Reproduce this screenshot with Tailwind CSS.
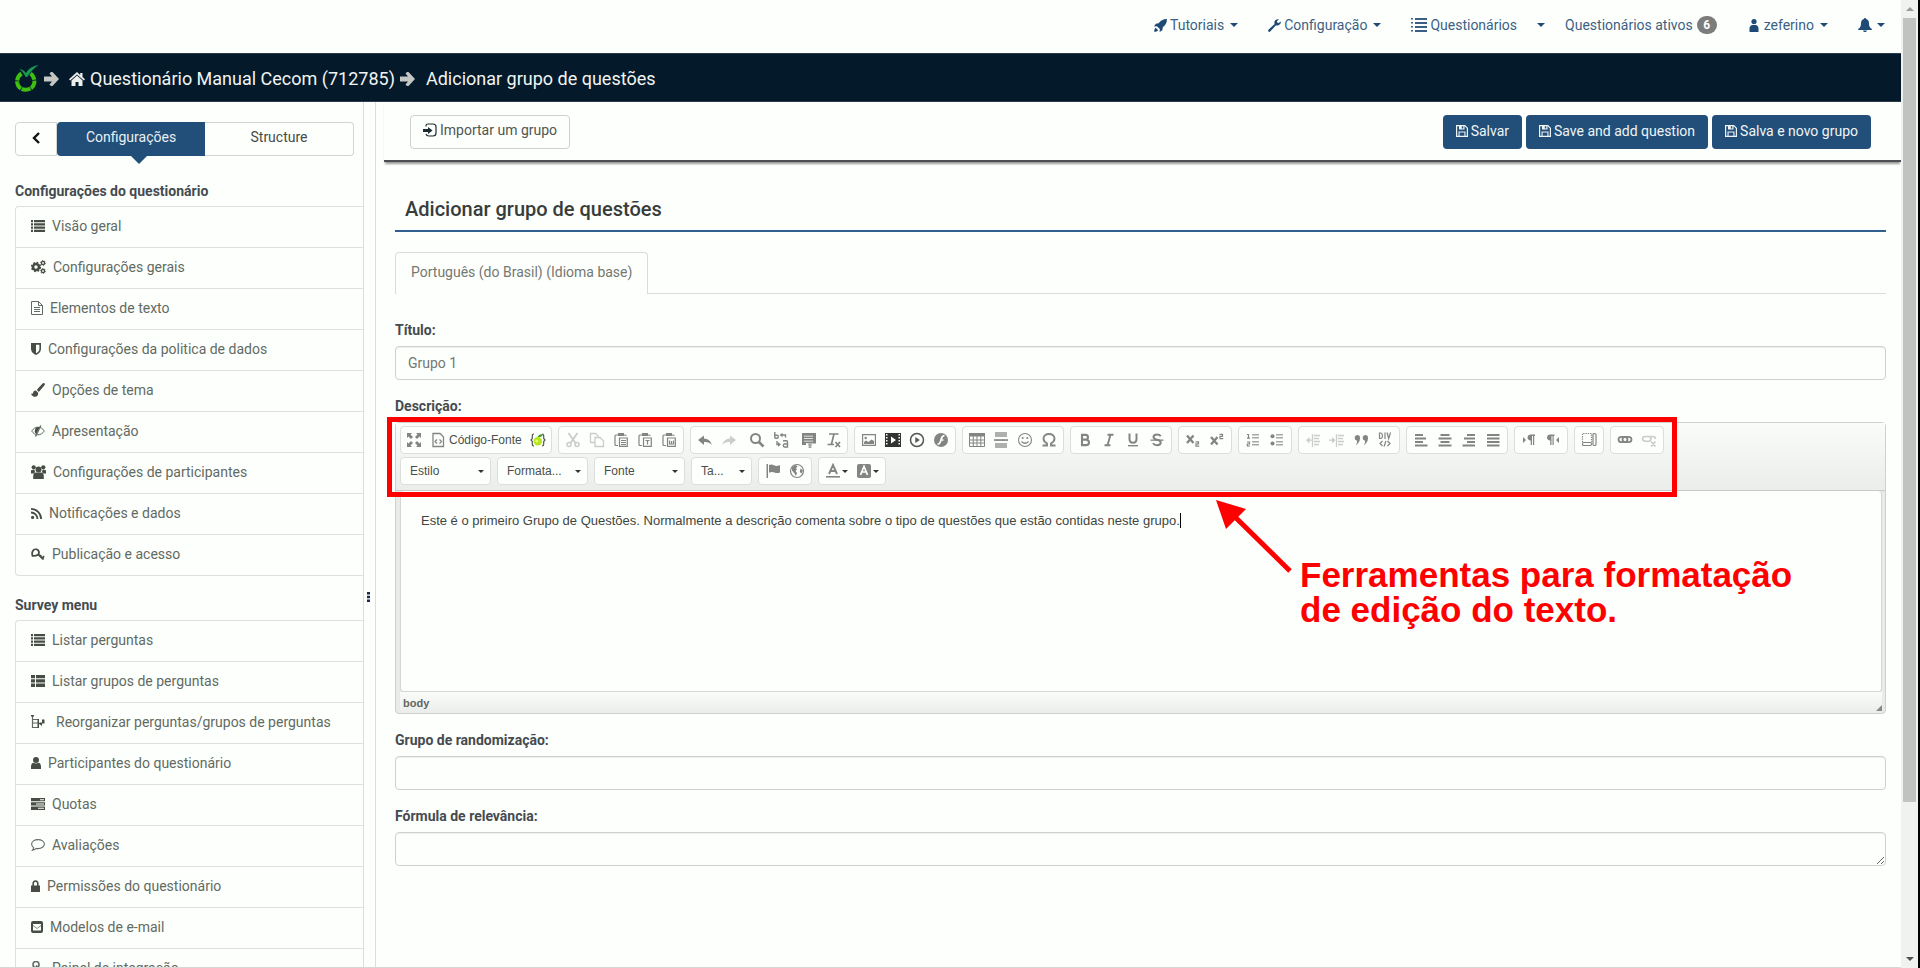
<!DOCTYPE html>
<html lang="pt-BR">
<head>
<meta charset="utf-8">
<title>Adicionar grupo de questões</title>
<script src="https://cdn.jsdelivr.net/npm/@tailwindcss/browser@4"></script>
</head>
<body class="bg-[#fdfffc] font-['Roboto',sans-serif] text-sm leading-5 text-[#4f564f]">

<!-- Icon definitions -->
<svg class="hidden" aria-hidden="true">
  <symbol id="caret" viewBox="0 0 8 4"><path d="M0 0h8L4 4z"/></symbol>
  <symbol id="rocket" viewBox="0 0 14 14"><path d="M14 0C9.500 0 7 2 5 4.500L2 5 0 8l3.200-.3L6.300 10.800 6 14l3-2 .5-3C12 7 14 4.500 14 0zM1.800 9.500C.5 10.500.3 12 .2 13.800 2 13.700 3.500 13.500 4.500 12.200z"/></symbol>
  <symbol id="wrench" viewBox="0 0 14 14"><path d="M13.800 2.600 11.500 4.300 9.800 3.900 9.600 2.300 11.800.4C9.800-.3 7.400.7 6.900 3c-.2 1 0 1.700.2 2.300L.5 11.500c-.6.7-.6 1.300 0 1.900.6.7 1.300.7 1.900 0L8.400 6.900c.7.2 1.600.3 2.500 0 2.200-.5 3.300-2.500 2.900-4.300z"/></symbol>
  <symbol id="listlines" viewBox="0 0 16 14"><path d="M4 0h12v2H4zM4 4h12v2H4zM4 8h12v2H4zM4 12h12v2H4zM0 0h2v1.500H0zM0 4h2v1.500H0zM0 8h2v1.500H0zM0 12h2v1.500H0z"/></symbol>
  <symbol id="person" viewBox="0 0 10 13"><circle cx="5" cy="2.600" r="2.600"/><path d="M.5 13V9.500c0-2.300 1.600-3.500 2.700-3.500h3.600c1.100 0 2.700 1.200 2.700 3.500V13z"/></symbol>
  <symbol id="bell" viewBox="0 0 14 14"><path d="M7 0c.7 0 1 .5 1 1 2 .5 3 2.200 3 4.300 0 3 .8 4.500 2.800 5.700v1H.2v-1C2.200 9.800 3 8.300 3 5.300 3 3.200 4 1.500 6 1c0-.5.300-1 1-1zM5 12.500h4C8.700 13.500 8 14 7 14s-1.700-.5-2-1.500z"/></symbol>
  <symbol id="arrow" viewBox="0 0 15 14"><path d="M7 0h1.500L15 7l-6.500 7H7L5.500 12.500 8 9.500H0v-5h8L5.500 1.500z"/></symbol>
  <symbol id="home" viewBox="0 0 16 14"><path d="M8 0 0 7.200l1.200 1.300L8 2.500l6.800 6L16 7.200l-2.500-2.300V1h-2.300v2zM8 3.500 2.500 8.500V14h4v-4h3v4h4V8.500z"/></symbol>
  <symbol id="import" viewBox="0 0 14 14"><path d="M3 3.500V2.500Q3 1 5 1h5q3 0 3 3v6q0 3-3 3H6q-2.500 0-3-2" fill="none" stroke="currentColor" stroke-width="1.200"/><path d="M5 4v2H0v3h5v2l4.500-3.500z"/></symbol>
  <symbol id="floppy" viewBox="0 0 12 12"><path d="M.6.6h8.200l2.600 2.600v8.200H.6z" fill="none" stroke="currentColor" stroke-width="1.200"/><path fill-rule="evenodd" d="M3 0h5.500v4.500H3zM5.800 1v2.500h1.500V1zM2.500 6.500h7V12h-7zM3.600 7.600v3.400h4.800V7.600z"/></symbol>
  <symbol id="list" viewBox="0 0 14 12"><path d="M3 0h11v2.200H3zM3 3.200h11v2.200H3zM3 6.500h11v2.200H3zM3 9.700h11v2.200H3zM0 0h2v2.200H0zM0 3.200h2v2.200H0zM0 6.500h2v2.200H0zM0 9.700h2v2.200H0z"/></symbol>
  <symbol id="thlist" viewBox="0 0 14 12"><path d="M0 0h4v3.300H0zM5 0h9v3.300H5zM0 4.300h4v3.300H0zM5 4.300h9v3.300H5zM0 8.600h4V12H0zM5 8.600h9V12H5z"/></symbol>
  <symbol id="cogs" viewBox="0 0 15 14"><circle cx="5" cy="7" r="3" fill="none" stroke="currentColor" stroke-width="2.600"/><circle cx="5" cy="7" r="4.500" fill="none" stroke="currentColor" stroke-width="1.400" stroke-dasharray="1.770"/><circle cx="12" cy="3" r="1.600" fill="none" stroke="currentColor" stroke-width="1.400"/><circle cx="12" cy="11" r="1.600" fill="none" stroke="currentColor" stroke-width="1.400"/><circle cx="12" cy="3" r="2.500" fill="none" stroke="currentColor" stroke-width=".8" stroke-dasharray="1.300"/><circle cx="12" cy="11" r="2.500" fill="none" stroke="currentColor" stroke-width=".8" stroke-dasharray="1.300"/></symbol>
  <symbol id="filetext" viewBox="0 0 12 14"><path d="M.5.5h7L11.500 4.500v9H.5zM7.500.5v4h4M3 6.500h6M3 8.500h6M3 10.500h6" fill="none" stroke="currentColor"/></symbol>
  <symbol id="shield" viewBox="0 0 10 12"><path fill-rule="evenodd" d="M0 0h10v6c0 3-2.500 5-5 6C2.500 11 0 9 0 6zM5 1.700v8.600C7 9.300 8.400 8 8.400 6V1.700z"/></symbol>
  <symbol id="brush" viewBox="0 0 14 14"><path d="M13.600.4c-.7-.6-1.500-.4-2 .1L5.800 6.800 7.800 9l5.700-6.800c.5-.6.6-1.300.1-1.800zM5 7.500c-1.500-.2-2.500.7-2.800 2C2 10.800 1 11 0 10.700 1 13 2.700 14 4.400 13.800c2-.2 3-2 2.700-4z"/></symbol>
  <symbol id="eyeoff" viewBox="0 0 14 12"><path d="M.7 6C2.300 3.500 4.500 2.200 7 2.200S11.700 3.500 13.300 6C11.700 8.500 9.500 9.800 7 9.800S2.300 8.500.7 6z" fill="none" stroke="currentColor"/><path d="M4 5a3 3 0 0 1 4.500-2.500L5.500 8.800A3 3 0 0 1 4 5z"/><path d="M9.800.5 4.500 11.500" stroke="currentColor" stroke-width="1.400"/></symbol>
  <symbol id="users" viewBox="0 0 15 14"><circle cx="2.700" cy="2.300" r="2.100"/><circle cx="12.300" cy="2.300" r="2.100"/><path d="M0 8.500V5.500Q.3 4.500 3.500 4.800L4 7 3 8.500zM15 8.500V5.500q-.3-1-3.500-.7L11 7l1 1.500z"/><circle cx="7.500" cy="4.500" r="3"/><path d="M2.200 14v-3c0-2.500 1.500-3.500 2.600-3.500h5.400c1.100 0 2.600 1 2.600 3.500v3z"/></symbol>
  <symbol id="rss" viewBox="0 0 11 11"><circle cx="1.600" cy="9.400" r="1.600"/><path d="M0 4.500A6.500 6.500 0 0 1 6.500 11M0 .9A10.100 10.100 0 0 1 10.100 11" fill="none" stroke="currentColor" stroke-width="1.800"/></symbol>
  <symbol id="key" viewBox="0 0 14 12"><path d="M4.500 1.200a3.300 3.300 0 0 1 3.200 4.600C7 7.700 3.800 8 1.500 7.800.5 5 1.800 1.200 4.500 1.200zM6.800 6l5.800 5.500M8.500 9l1.800-1.800M10.500 10.800l2.600-2.600" fill="none" stroke="currentColor" stroke-width="1.800"/></symbol>
  <symbol id="reorder" viewBox="0 0 14 14"><path d="M1.500 1v12M1.500 4.500H7M1.500 8H7M1.500 12.500H7" fill="none" stroke="currentColor" stroke-width="1.200"/><path d="M0 0h3v1.500H0zM6.500 4h1.500v9H6.500zM11 4.500h2.500v4H11V11L7.500 8.500 9 7.500h2z"/></symbol>
  <symbol id="userfa" viewBox="0 0 10 12"><circle cx="5" cy="3" r="3"/><path d="M0 12V9.500C0 7 1.300 5.800 2.500 5.700c1.500 1 3.500 1 5 0C8.700 5.800 10 7 10 9.500V12z"/></symbol>
  <symbol id="quota" viewBox="0 0 14 12"><path fill-rule="evenodd" d="M0 0h14v3.300H0zM9 1.200v1h4v-1zM0 4.300h14v3.300H0zM5 5.500v1h8v-1zM0 8.600h14V12H0zM7 9.800v1h6v-1z"/></symbol>
  <symbol id="comment" viewBox="0 0 14 12"><path d="M7 .6c3.600 0 6.400 2 6.400 4.500S10.600 9.600 7 9.600c-.6 0-1.200 0-1.700-.2C4.200 10.400 3 11 1.500 11.200c.7-.8 1-1.500 1.200-2.500C1.400 7.900.6 6.700.6 5.100.6 2.600 3.400.6 7 .6z" fill="none" stroke="currentColor" stroke-width="1.100"/></symbol>
  <symbol id="lock" viewBox="0 0 9 12"><path d="M2.200 6V3.800C2.200 2.200 3 1 4.500 1s2.300 1.200 2.300 2.800V6" fill="none" stroke="currentColor" stroke-width="1.600"/><path d="M0 5.500h9V12H0z"/></symbol>
  <symbol id="mail" viewBox="0 0 12 12"><path fill-rule="evenodd" d="M2 0h8q2 0 2 2v8q0 2-2 2H2q-2 0-2-2V2q0-2 2-2zM2 3v6.500h8V3z"/><path d="M2 4.500 6 7.500l4-3" fill="none" stroke="currentColor" stroke-width=".8"/></symbol>
  <symbol id="plug" viewBox="0 0 14 14"><circle cx="5" cy="3.500" r="3" fill="none" stroke="currentColor" stroke-width="1.600"/><path d="M5 6.500v6h5M5 4.500l5 4.500" fill="none" stroke="currentColor" stroke-width="1.600"/></symbol>

  <!-- Editor toolbar -->
  <symbol id="e-max" viewBox="0 0 16 16"><path d="M1 1h5L4.500 2.500 7 5 5 7 2.500 4.500 1 6zM15 1v5l-1.500-1.500L11 7 9 5l2.500-2.500L10 1zM1 15v-5l1.500 1.500L5 9l2 2-2.500 2.500L6 15zM15 15h-5l1.500-1.500L9 11l2-2 2.500 2.500L15 10z"/></symbol>
  <symbol id="e-source" viewBox="0 0 16 16"><path d="M3 1.500h7L13.500 5v9.500H3zM7 7.500 5 9.500l2 2M9.500 7.500l2 2-2 2" fill="none" stroke="currentColor" stroke-width="1.300"/></symbol>
  <symbol id="e-cut" viewBox="0 0 16 16"><path d="M3.500 1 10.500 11M12.500 1 5.500 11" fill="none" stroke="currentColor" stroke-width="1.800"/><circle cx="4" cy="12.500" r="2" fill="none" stroke="currentColor" stroke-width="1.500"/><circle cx="12" cy="12.500" r="2" fill="none" stroke="currentColor" stroke-width="1.500"/></symbol>
  <symbol id="e-copy" viewBox="0 0 16 16"><path d="M5.500 10.500h-4v-9h5l3 3M6 5.500h5L14.500 9v5.500H6z" fill="none" stroke="currentColor" stroke-width="1.300"/></symbol>
  <symbol id="e-paste" viewBox="0 0 16 16"><path d="M5 13.500H3q-1 0-1-1V4q0-1 1-1h9q1 0 1 1M6.500 6h7.800v8.300H6.500zM8 8.500h5M8 10.500h5M8 12.500h5" fill="none" stroke="currentColor" stroke-width="1.200"/><path d="M5 1h6v3H5z"/></symbol>
  <symbol id="e-pastet" viewBox="0 0 16 16"><path d="M5 13.500H3q-1 0-1-1V4q0-1 1-1h9q1 0 1 1M6.500 6h7.800v8.300H6.500zM8.500 8.500h4M10.500 8.500v4" fill="none" stroke="currentColor" stroke-width="1.200"/><path d="M5 1h6v3H5z"/></symbol>
  <symbol id="e-pastew" viewBox="0 0 16 16"><path d="M5 13.500H3q-1 0-1-1V4q0-1 1-1h9q1 0 1 1M6.500 6h7.800v8.300H6.500zM8.500 8.500v3.500h4V8.500M10.500 9v3" fill="none" stroke="currentColor" stroke-width="1.200"/><path d="M5 1h6v3H5z"/></symbol>
  <symbol id="e-undo" viewBox="0 0 16 16"><path d="M1 8 7 3.500V6.500q6 .2 8 6.500-3-3.500-8-3V13z"/></symbol>
  <symbol id="e-redo" viewBox="0 0 16 16"><path d="M15 8 9 3.500V6.500q-6 .2-8 6.500 3-3.500 8-3V13z"/></symbol>
  <symbol id="e-find" viewBox="0 0 16 16"><circle cx="6.500" cy="6.500" r="4.500" fill="none" stroke="currentColor" stroke-width="2"/><path d="m9.500 9.500 5 5" stroke="currentColor" stroke-width="2.600"/></symbol>
  <symbol id="e-replace" viewBox="0 0 16 16"><path d="M1.800 0v6.200M1.800 3.200h2.500q1 .3 1 1.500t-1 1.500H1.800M10 8.700h3.500q1 0 1 1V15H11.500q-1.200-.3-1.200-1.500t1.200-1.500h3M8.500 3h4v2.500M5.500 12.500H4V9" fill="none" stroke="currentColor" stroke-width="1.400"/><path d="m9.500.8-3 2.200 3 2.200zM5 10l3 2.400-3 2.400z"/></symbol>
  <symbol id="e-selall" viewBox="0 0 16 16"><path fill-rule="evenodd" d="M1 1h14v10.500H6.500V11H5v2H1zM3 3.800v.6h9v-.6zM3 6.300v.6h9v-.6zM3 8.800v.6h9v-.6z"/><path d="M7 13h4M9 12v3.500M7.500 15.200h3" stroke="currentColor" stroke-width="1"/></symbol>
  <symbol id="e-rmfmt" viewBox="0 0 16 16"><path d="M4 2h9.500M9 2 6.500 12M2.500 12.500H9M10.500 10l4.500 5M15 10l-4.500 5" fill="none" stroke="currentColor" stroke-width="1.700"/></symbol>
  <symbol id="e-image" viewBox="0 0 16 16"><path fill-rule="evenodd" d="M1 2h14v12H1zM2.200 3.200v9.600h11.600V3.200z"/><circle cx="4.700" cy="6" r="1.200"/><path d="m3 12v-2l2-1.500 2.500 1.500 3-2.500L13 9v3z"/></symbol>
  <symbol id="e-video" viewBox="0 0 16 16"><path fill-rule="evenodd" fill="#333" d="M0 1h16v14H0zM1 2v1.500h1.500V2zM1 5v1.500h1.500V5zM1 8v1.500h1.500V8zM1 11v1.500h1.500V11zM13.500 2v1.500H15V2zM13.500 5v1.500H15V5zM13.500 8v1.500H15V8zM13.500 11v1.500H15V11zM6 4.500v7l5-3.500z"/></symbol>
  <symbol id="e-play" viewBox="0 0 16 16"><circle cx="8" cy="8" r="6.500" fill="none" stroke="#555" stroke-width="1.500"/><path fill="#555" d="M6.300 5v6l4.500-3z"/></symbol>
  <symbol id="e-flash" viewBox="0 0 16 16"><circle cx="8" cy="8" r="7"/><path d="M11.500 3.500Q9 4 8.200 7L7.500 9.500Q6.800 12 4.500 12.500M7.500 8h3" fill="none" stroke="#fdfffc" stroke-width="1.700"/></symbol>
  <symbol id="e-table" viewBox="0 0 16 16"><path d="M0 1h16v3.500H0z"/><path d="M.5 4v10.500h15V4M.5 8h15M.5 11h15M4.300 4v10.500M8 4v10.500M11.800 4v10.500" fill="none" stroke="currentColor"/></symbol>
  <symbol id="e-hr" viewBox="0 0 16 16"><path d="M2 0h12v5H2zM2 11h12v5H2z" opacity=".65"/><path d="M1 7.200h14v1.700H1z"/></symbol>
  <symbol id="e-smile" viewBox="0 0 16 16"><circle cx="8" cy="8" r="6.500" fill="none" stroke="currentColor" stroke-width="1.100"/><circle cx="5.700" cy="6" r="1"/><circle cx="10.300" cy="6" r="1"/><path d="M4.500 9.500q3.500 3.500 7 0" fill="none" stroke="currentColor" stroke-width="1.200"/></symbol>
  <symbol id="e-omega" viewBox="0 0 16 16"><path d="M1.500 13.500H6v-2C3.500 10 2.500 8.500 2.500 6.500 2.500 3.800 4.800 2 8 2s5.500 1.800 5.500 4.500c0 2-1 3.500-3.500 5v2h4.500" fill="none" stroke="currentColor" stroke-width="1.900"/></symbol>
  <symbol id="e-bold" viewBox="0 0 16 16"><path d="M5 2.500v11M4 2.900h4.500q2.500.2 2.500 2.300T8.500 7.500H5M5 7.700h4q3 .2 3 2.700T9 13.100H4" fill="none" stroke="currentColor" stroke-width="2.100"/></symbol>
  <symbol id="e-italic" viewBox="0 0 16 16"><path d="M6.500 2.700h6M3.500 13.200h6M9.500 2.700l-3 10.500" fill="none" stroke="currentColor" stroke-width="1.900"/></symbol>
  <symbol id="e-under" viewBox="0 0 16 16"><path d="M4.500 1.500V7q0 3.700 3.500 3.700T11.500 7V1.500" fill="none" stroke="currentColor" stroke-width="2"/><path d="M3 13h10v1.400H3z"/></symbol>
  <symbol id="e-strike" viewBox="0 0 16 16"><path d="M11.800 4.200Q10.500 2.500 8 2.500 4.500 2.500 4.500 5 4.500 7 8 7.800q3.700.7 3.700 2.800 0 2.700-3.700 2.700-2.700 0-4-2" fill="none" stroke="currentColor" stroke-width="2"/><path d="M1.500 7.500h13v1.300h-13z"/></symbol>
  <symbol id="e-sub" viewBox="0 0 16 16"><path d="m2 3.500 6.500 7.500M8.500 3.500 2 11" stroke="currentColor" stroke-width="2.300"/><path d="M10.500 9.800h3v2h-2.500v2.400h3.300" fill="none" stroke="currentColor" stroke-width="1.200"/></symbol>
  <symbol id="e-sup" viewBox="0 0 16 16"><path d="m2 5 6.500 7.500M8.500 5 2 12.500" stroke="currentColor" stroke-width="2.300"/><path d="M10.500 2.300h3v2h-2.500v2.400h3.300" fill="none" stroke="currentColor" stroke-width="1.200"/></symbol>
  <symbol id="e-ol" viewBox="0 0 16 16"><path d="M7 2h7v1.500H7zM7 5h7v1.500H7zM7 9h7v1.500H7zM7 12h7v1.500H7z" opacity=".7"/><path d="M2 2.500h1.500V6M2 6.200h3M2 10h2.500v2H2.300v2H5" fill="none" stroke="currentColor" stroke-width="1.200"/></symbol>
  <symbol id="e-ul" viewBox="0 0 16 16"><path d="M7 2h7v1.500H7zM7 5h7v1.500H7zM7 9h7v1.500H7zM7 12h7v1.500H7z" opacity=".7"/><circle cx="3.500" cy="4.300" r="2"/><circle cx="3.500" cy="11.500" r="2"/></symbol>
  <symbol id="e-outdent" viewBox="0 0 16 16"><path d="M7.500 2v13M9 3.500h6M9 6.500h5M9 9.500h6M9 12.500h5M3 8.200h4" fill="none" stroke="currentColor" stroke-width="1.300"/><path d="M1 8.200 4.500 5v6.400z"/></symbol>
  <symbol id="e-indent" viewBox="0 0 16 16"><path d="M7.500 2v13M9 3.500h6M9 6.500h5M9 9.500h6M9 12.500h5M0 8.200h4" fill="none" stroke="currentColor" stroke-width="1.300"/><path d="M6.500 8.200 3 5v6.400z"/></symbol>
  <symbol id="e-quote" viewBox="0 0 16 16"><path d="M4 3a3 3 0 0 1 3 3.200C7 9.500 5 12 2.500 13 4 11.500 4.300 10 4 8.700A2.900 2.900 0 0 1 4 3zM12 3a3 3 0 0 1 3 3.200c0 3.300-2 5.800-4.500 6.800 1.500-1.500 1.800-3 1.500-4.300A2.900 2.900 0 0 1 12 3z"/></symbol>
  <symbol id="e-div" viewBox="0 0 16 16"><path d="M2.500 1v5.500H4q1.500-.5 1.500-2.700T4 1zM8 .5V7M10 .5l1.700 6L13.500.5M5.500 9 3 11.500 5.500 14M10.500 9l2.500 2.500-2.500 2.500M9 9l-2 5.500" fill="none" stroke="currentColor" stroke-width="1.200"/></symbol>
  <symbol id="e-al" viewBox="0 0 16 16"><path d="M2 2h8v2H2zM2 5.500h11v2H2zM2 9h8v2H2zM2 12.500h12.500v2H2z"/></symbol>
  <symbol id="e-ac" viewBox="0 0 16 16"><path d="M3.500 2h9v2h-9zM1.500 5.500h13v2h-13zM3.500 9h9v2h-9zM1.500 12.500h13v2h-13z"/></symbol>
  <symbol id="e-ar" viewBox="0 0 16 16"><path d="M6 2h8v2H6zM3 5.500h11v2H3zM6 9h8v2H6zM1.500 12.500H14v2H1.500z"/></symbol>
  <symbol id="e-aj" viewBox="0 0 16 16"><path d="M2 2h12.500v2H2zM2 5.500h12.500v2H2zM2 9h12.500v2H2zM2 12.500h12.500v2H2z"/></symbol>
  <symbol id="e-ltr" viewBox="0 0 16 16"><path d="M2 5v6l3-3zM9 2.500h5V4h-.8v9H12V4h-1v9H9.700V8.500Q6.500 8.200 6.500 5.500T9 2.500z"/></symbol>
  <symbol id="e-rtl" viewBox="0 0 16 16"><path d="M14 5v6l-3-3zM4.500 2.500h5V4h-.8v9H7.500V4h-1v9H5.200V8.500Q2 8.200 2 5.500t2.500-3z"/></symbol>
  <symbol id="e-page" viewBox="0 0 16 16"><path d="M1.500 10V1.500h9V10" fill="none" stroke="currentColor" stroke-width="1.200" stroke-dasharray="1.300 1"/><path d="M2.500 10.500h7q1 0 1 1.500t-1 1.500h-7q-1 0-1-1.500t1-1.500zM12 2.500q0-1 1.500-1t1.500 1v10q0 1-1.500 1t-1.500-1z" fill="none" stroke="currentColor" stroke-width="1.200"/></symbol>
  <symbol id="e-link" viewBox="0 0 16 16"><path d="M4.500 4.800h3q3 0 3 2.700t-3 2.700h-3q-3 0-3-2.700t3-2.700zM8.500 4.800h3q3 0 3 2.700t-3 2.700h-3q-3 0-3-2.700t3-2.700z" fill="none" stroke="currentColor" stroke-width="1.800"/></symbol>
  <symbol id="e-unlink" viewBox="0 0 16 16"><path d="M4.500 4.500h3q2.500 0 2.500 2.300T7.500 9.200h-3Q1.500 9 1.500 6.800t3-2.300zM8.500 4.500h3q3 0 3 2.500M10 9.500l4.500 5M14.500 9.500l-4.500 5" fill="none" stroke="currentColor" stroke-width="1.600"/></symbol>
  <symbol id="e-flag" viewBox="0 0 16 16"><path d="M1.500 1H3v14H1.500zM4 2q2.500-1 5 .3T15 2v7.500q-3 1-5.500 0T4 9.700z"/></symbol>
  <symbol id="e-globe" viewBox="0 0 16 16"><circle cx="8" cy="8" r="6.500" fill="none" stroke="currentColor" stroke-width="1.200"/><path d="M3 4.500 6 2l2.500 1L7 5.500l1 1L6.500 8 8 10l-1 3-1.500-2.500L3 7.500zM11.500 5.500l2.500 2-1.500 3-1.700-1.500z"/></symbol>
  <symbol id="e-color" viewBox="0 0 16 16"><path d="M4 11 8 2l4 9M5.500 8h5" fill="none" stroke="currentColor" stroke-width="1.900"/><path d="M1 13h14v1.600H1z"/></symbol>
  <symbol id="e-bgcolor" viewBox="0 0 16 16"><rect x="1" y="1" width="14" height="14" rx="2"/><path d="M4.500 12 8 3.500l3.500 8.500M5.800 9h4.400" fill="none" stroke="#fdfffc" stroke-width="1.700"/></symbol>
  <symbol id="e-lime" viewBox="0 0 16 16"><path d="M4 2Q2.300 2 2.300 4v2.500L1 8l1.300 1.500V12q0 2 1.700 2M12 2q1.700 0 1.700 2v2.500L15 8l-1.300 1.500V12q0 2-1.700 2" fill="none" stroke="#555" stroke-width="1.200"/><circle cx="7.800" cy="9.200" r="4.200" fill="#b5e61d"/><path d="M7.500 5Q9 1.500 13 2.500 12 5.500 7.500 5z" fill="#3f9a2a"/><circle cx="6.800" cy="9" r="1.500" fill="#e9ff7a"/></symbol>
</svg>

<div class="flex h-screen overflow-hidden">
  <div class="flex min-w-0 flex-1 flex-col border-b border-[#d5d8d5]">

    <!-- Top navigation -->
    <nav class="flex h-[53px] shrink-0 items-center justify-end pr-4 pb-[3px] text-[#3c5f86]" aria-label="Principal">
      <a href="#" class="mr-[30px] flex items-center"><svg class="mr-[3px] size-[13px] fill-[#1f4a76]"><use href="#rocket"/></svg>Tutoriais<svg class="ml-1.5 h-1 w-2 fill-[#1f4a76]"><use href="#caret"/></svg></a>
      <a href="#" class="mr-[30px] flex items-center"><svg class="mr-[3px] size-[13px] fill-[#1f4a76]"><use href="#wrench"/></svg>Configuração<svg class="ml-1.5 h-1 w-2 fill-[#1f4a76]"><use href="#caret"/></svg></a>
      <a href="#" class="mr-5 flex items-center"><svg class="mr-[3px] h-[14px] w-4 fill-[#3c5f86]"><use href="#listlines"/></svg>Questionários</a>
      <button type="button" class="mr-5 flex" aria-label="Abrir questionários"><svg class="h-1 w-2 fill-[#1f4a76]"><use href="#caret"/></svg></button>
      <a href="#" class="mr-8 flex items-center">Questionários ativos<span class="ml-1 flex h-[18px] w-5 items-center justify-center rounded-full bg-[#7c7c7c] text-xs font-bold text-white">6</span></a>
      <a href="#" class="mr-[30px] flex items-center"><svg class="mr-[5px] h-[13px] w-[10px] fill-[#1f4a76]"><use href="#person"/></svg>zeferino<svg class="ml-1.5 h-1 w-2 fill-[#1f4a76]"><use href="#caret"/></svg></a>
      <button type="button" class="flex items-center" aria-label="Notificações"><svg class="mr-[5px] size-[14px] fill-[#1f4a76]"><use href="#bell"/></svg><svg class="h-1 w-2 fill-[#1f4a76]"><use href="#caret"/></svg></button>
    </nav>

    <!-- Breadcrumb -->
    <header class="flex h-[49px] shrink-0 items-center border-y border-[#2b3d4c] bg-[#041a2b] px-[14px] pt-0.5 text-lg text-[#f2f4f2]">
      <a href="#" aria-label="LimeSurvey"><svg class="h-[27px] w-[26px]" viewBox="0 0 26 27"><path d="M7.500 8.500Q2.500 12 3.300 18 4.500 24.500 11.500 24.700 19 24.500 20.300 18 21 12 16.500 8.500" fill="none" stroke="#3fbf12" stroke-width="4" stroke-dasharray="8.500 .8"/><path d="M5.500 4Q9.500 4.500 12 8 15.500 1.500 24.500 0 17.500 5 13.500 11.500q-1 1-2 0Q9 6.500 5.500 4z" fill="#1a9a50"/></svg></a>
      <svg class="ml-1 h-[14px] w-[15px] fill-[#c4c6c4]"><use href="#arrow"/></svg>
      <a href="#" class="ml-[10px] flex items-center"><svg class="mr-[5px] h-[14px] w-4 fill-[#eceeec]"><use href="#home"/></svg>Questionário Manual Cecom (712785)</a>
      <svg class="ml-[5px] h-[14px] w-[15px] fill-[#c4c6c4]"><use href="#arrow"/></svg>
      <span class="ml-[11px]">Adicionar grupo de questões</span>
    </header>

    <div class="flex min-h-0 flex-1">
      <!-- Sidebar -->
      <aside class="w-[364px] shrink-0 overflow-hidden border-r border-[#dcdedb] pt-5 pl-[15px]">
        <div class="mr-[9px] flex h-[34px]">
          <button type="button" class="flex w-[42px] items-center justify-center rounded-l border border-[#d3d5d2] pb-0.5" aria-label="Recolher menu"><svg class="h-3 w-2" viewBox="0 0 8 12"><path d="M7 1 2 6l5 5" fill="none" stroke="#111" stroke-width="2.400"/></svg></button>
          <button type="button" class="relative flex-1 rounded-l bg-[#214f7a] pb-1 text-[#e9eff3]">Configurações<svg class="absolute top-full left-1/2 h-2 w-4 fill-[#214f7a]" viewBox="0 0 16 8"><path d="M0 0h16L8 8z"/></svg></button>
          <button type="button" class="flex-1 rounded-r border border-l-0 border-[#d3d5d2] pb-1 text-[#454b46]">Structure</button>
        </div>
        <h2 class="mt-[25px] mb-[5px] font-bold text-[#454b50]">Configurações do questionário</h2>
        <ul class="divide-y divide-[#dde0dc] rounded-l border-y border-l border-[#dde0dc] fill-[#474d44]">
          <li><a href="#" class="flex h-10 items-center pb-0.5 pl-[15px] text-[#626a63]"><svg class="mr-[7px] h-3 w-[14px]"><use href="#list"/></svg>Visão geral</a></li>
          <li><a href="#" class="flex h-10 items-center pb-0.5 pl-[15px] text-[#626a63]"><svg class="mr-[7px] h-[14px] w-[15px] text-[#474d44]"><use href="#cogs"/></svg>Configurações gerais</a></li>
          <li><a href="#" class="flex h-10 items-center pb-0.5 pl-[15px] text-[#626a63]"><svg class="mr-[7px] h-[14px] w-3"><use href="#filetext"/></svg>Elementos de texto</a></li>
          <li><a href="#" class="flex h-10 items-center pb-0.5 pl-[15px] text-[#626a63]"><svg class="mr-[7px] h-3 w-[10px]"><use href="#shield"/></svg>Configurações da politica de dados</a></li>
          <li><a href="#" class="flex h-10 items-center pb-0.5 pl-[15px] text-[#626a63]"><svg class="mr-[7px] size-[14px]"><use href="#brush"/></svg>Opções de tema</a></li>
          <li><a href="#" class="flex h-10 items-center pb-0.5 pl-[15px] text-[#626a63]"><svg class="mr-[7px] h-3 w-[14px]"><use href="#eyeoff"/></svg>Apresentação</a></li>
          <li><a href="#" class="flex h-10 items-center pb-0.5 pl-[15px] text-[#626a63]"><svg class="mr-[7px] h-[14px] w-[15px]"><use href="#users"/></svg>Configurações de participantes</a></li>
          <li><a href="#" class="flex h-10 items-center pb-0.5 pl-[15px] text-[#626a63]"><svg class="mr-[7px] size-[11px] text-[#474d44]"><use href="#rss"/></svg>Notificações e dados</a></li>
          <li><a href="#" class="flex h-10 items-center pb-0.5 pl-[15px] text-[#626a63]"><svg class="mr-[7px] h-3 w-[14px] fill-none text-[#474d44]"><use href="#key"/></svg>Publicação e acesso</a></li>
        </ul>
        <h2 class="mt-[19px] mb-[5px] font-bold text-[#454b50]">Survey menu</h2>
        <ul class="divide-y divide-[#dde0dc] rounded-l border-y border-l border-[#dde0dc] fill-[#474d44]">
          <li><a href="#" class="flex h-10 items-center pb-0.5 pl-[15px] text-[#626a63]"><svg class="mr-[7px] h-3 w-[14px]"><use href="#list"/></svg>Listar perguntas</a></li>
          <li><a href="#" class="flex h-10 items-center pb-0.5 pl-[15px] text-[#626a63]"><svg class="mr-[7px] h-3 w-[14px]"><use href="#thlist"/></svg>Listar grupos de perguntas</a></li>
          <li><a href="#" class="flex h-10 items-center pb-0.5 pl-[15px] text-[#626a63]"><svg class="mr-[11px] size-[14px]"><use href="#reorder"/></svg>Reorganizar perguntas/grupos de perguntas</a></li>
          <li><a href="#" class="flex h-10 items-center pb-0.5 pl-[15px] text-[#626a63]"><svg class="mr-[7px] h-3 w-[10px]"><use href="#userfa"/></svg>Participantes do questionário</a></li>
          <li><a href="#" class="flex h-10 items-center pb-0.5 pl-[15px] text-[#626a63]"><svg class="mr-[7px] h-3 w-[14px]"><use href="#quota"/></svg>Quotas</a></li>
          <li><a href="#" class="flex h-10 items-center pb-0.5 pl-[15px] text-[#626a63]"><svg class="mr-[7px] h-3 w-[14px]"><use href="#comment"/></svg>Avaliações</a></li>
          <li><a href="#" class="flex h-10 items-center pb-0.5 pl-[15px] text-[#626a63]"><svg class="mr-[7px] h-3 w-[9px] text-[#474d44]"><use href="#lock"/></svg>Permissões do questionário</a></li>
          <li><a href="#" class="flex h-10 items-center pb-0.5 pl-[15px] text-[#626a63]"><svg class="mr-[7px] size-3"><use href="#mail"/></svg>Modelos de e-mail</a></li>
          <li><a href="#" class="flex h-10 items-center pb-0.5 pl-[15px] text-[#626a63]"><svg class="mr-[7px] size-[14px]"><use href="#plug"/></svg>Painel de integração</a></li>
        </ul>
      </aside>

      <!-- Resize grip -->
      <div class="flex w-3 shrink-0 items-center border-r border-[#dcdedb] pt-[125px] pl-[3px]" role="separator" aria-orientation="vertical">
        <svg class="h-[10px] w-[3px] fill-[#1c2b4a]" viewBox="0 0 3 10"><path d="M0 0h3v2.400H0zM0 3.800h3v2.400H0zM0 7.600h3V10H0z"/></svg>
      </div>

      <form class="flex min-w-0 flex-1 flex-col pl-2">
        <!-- Action bar -->
        <div class="flex h-[60px] shrink-0 items-start border-b-2 border-[#4b4e52] pt-[13px] pr-[30px] pl-[26px] shadow-[0_3px_2px_-1px_#0006]">
          <button type="button" class="flex h-[34px] items-center rounded border border-[#cfd1ce] px-3 pb-1"><svg class="mr-[3px] size-[14px] fill-[#1c2b30] text-[#1c2b30]"><use href="#import"/></svg>Importar um grupo</button>
          <div class="ml-auto flex gap-1 text-[#f0f4f5]">
            <button type="submit" class="flex h-[34px] items-center rounded bg-[#214f7a] px-[13px] pb-0.5"><svg class="mr-[3px] size-3 fill-current"><use href="#floppy"/></svg>Salvar</button>
            <button type="submit" class="flex h-[34px] items-center rounded bg-[#214f7a] px-[13px] pb-0.5"><svg class="mr-[3px] size-3 fill-current"><use href="#floppy"/></svg>Save and add question</button>
            <button type="submit" class="flex h-[34px] items-center rounded bg-[#214f7a] px-[13px] pb-0.5"><svg class="mr-[3px] size-3 fill-current"><use href="#floppy"/></svg>Salva e novo grupo</button>
          </div>
        </div>

        <main class="pr-[15px] pl-[11px]">
          <h1 class="border-b-2 border-[#30608f] pt-[33px] pb-[7px] pl-[10px] text-xl leading-7 font-medium text-[#383c3a]">Adicionar grupo de questões</h1>

          <div class="mt-5 flex h-[42px] items-stretch" role="tablist">
            <button type="button" role="tab" aria-selected="true" class="rounded-t border border-b-0 border-[#dadcd9] px-[15px] pb-1 text-[#737873]">Português (do Brasil) (Idioma base)</button>
            <div class="flex-1 border-b border-[#dadcd9]"></div>
          </div>

          <label for="titulo" class="mt-[26px] mb-[6px] block font-bold text-[#454b50]">Título:</label>
          <input id="titulo" type="text" value="Grupo 1" class="block h-[34px] w-full rounded border border-[#cfd1ce] px-3 text-[#737873] shadow-[inset_0_1px_1px_#0001]">

          <label for="descricao" class="mt-4 mb-[6px] block font-bold text-[#454b50]">Descrição:</label>
          <div class="relative rounded-sm border border-[#cfd1ce] bg-[#e9ebe8] font-['Liberation_Sans',sans-serif]">
            <!-- Editor toolbar -->
            <div class="flex flex-col gap-[3px] border-b border-[#c9cbc8] bg-linear-to-b from-[#fafcf9] to-[#ebedea] px-1 pt-[3px] pb-[5px] text-xs text-[#4b4f4b]">
              <div class="flex gap-[6px] fill-[#828582] text-[#828582]">
                <div class="flex h-7 items-center gap-2 rounded border border-[#dcdedb] bg-[#fdfffc] px-[5px]">
                  <button type="button" aria-label="Maximizar"><svg class="size-4"><use href="#e-max"/></svg></button>
                  <button type="button" class="flex items-center text-[#4b4f4b]"><svg class="mr-[3px] size-4 text-[#828582]"><use href="#e-source"/></svg>Código-Fonte</button>
                  <button type="button" aria-label="Expressões"><svg class="size-4"><use href="#e-lime"/></svg></button>
                </div>
                <div class="flex h-7 items-center gap-2 rounded border border-[#dcdedb] bg-[#fdfffc] px-[6px]">
                  <button type="button" aria-label="Recortar" class="opacity-40"><svg class="size-4"><use href="#e-cut"/></svg></button>
                  <button type="button" aria-label="Copiar" class="opacity-40"><svg class="size-4"><use href="#e-copy"/></svg></button>
                  <button type="button" aria-label="Colar"><svg class="size-4"><use href="#e-paste"/></svg></button>
                  <button type="button" aria-label="Colar como texto"><svg class="size-4"><use href="#e-pastet"/></svg></button>
                  <button type="button" aria-label="Colar do Word"><svg class="size-4"><use href="#e-pastew"/></svg></button>
                </div>
                <div class="flex h-7 items-center gap-2 rounded border border-[#dcdedb] bg-[#fdfffc] px-[6px]">
                  <button type="button" aria-label="Desfazer"><svg class="size-4"><use href="#e-undo"/></svg></button>
                  <button type="button" aria-label="Refazer" class="opacity-40"><svg class="size-4"><use href="#e-redo"/></svg></button>
                  <button type="button" aria-label="Localizar" class="ml-1"><svg class="size-4"><use href="#e-find"/></svg></button>
                  <button type="button" aria-label="Substituir"><svg class="size-4"><use href="#e-replace"/></svg></button>
                  <button type="button" aria-label="Selecionar tudo" class="ml-1"><svg class="size-4"><use href="#e-selall"/></svg></button>
                  <button type="button" aria-label="Remover formatação"><svg class="size-4"><use href="#e-rmfmt"/></svg></button>
                </div>
                <div class="flex h-7 items-center gap-2 rounded border border-[#dcdedb] bg-[#fdfffc] px-[6px]">
                  <button type="button" aria-label="Imagem"><svg class="size-4"><use href="#e-image"/></svg></button>
                  <button type="button" aria-label="Vídeo"><svg class="size-4"><use href="#e-video"/></svg></button>
                  <button type="button" aria-label="Áudio"><svg class="size-4"><use href="#e-play"/></svg></button>
                  <button type="button" aria-label="Flash"><svg class="size-4"><use href="#e-flash"/></svg></button>
                </div>
                <div class="flex h-7 items-center gap-2 rounded border border-[#dcdedb] bg-[#fdfffc] px-[6px]">
                  <button type="button" aria-label="Tabela"><svg class="size-4"><use href="#e-table"/></svg></button>
                  <button type="button" aria-label="Linha horizontal"><svg class="size-4"><use href="#e-hr"/></svg></button>
                  <button type="button" aria-label="Emoticon"><svg class="size-4"><use href="#e-smile"/></svg></button>
                  <button type="button" aria-label="Caractere especial"><svg class="size-4"><use href="#e-omega"/></svg></button>
                </div>
                <div class="flex h-7 items-center gap-2 rounded border border-[#dcdedb] bg-[#fdfffc] px-[6px]">
                  <button type="button" aria-label="Negrito"><svg class="size-4"><use href="#e-bold"/></svg></button>
                  <button type="button" aria-label="Itálico"><svg class="size-4"><use href="#e-italic"/></svg></button>
                  <button type="button" aria-label="Sublinhado"><svg class="size-4"><use href="#e-under"/></svg></button>
                  <button type="button" aria-label="Tachado"><svg class="size-4"><use href="#e-strike"/></svg></button>
                </div>
                <div class="flex h-7 items-center gap-2 rounded border border-[#dcdedb] bg-[#fdfffc] px-[6px]">
                  <button type="button" aria-label="Subscrito"><svg class="size-4"><use href="#e-sub"/></svg></button>
                  <button type="button" aria-label="Sobrescrito"><svg class="size-4"><use href="#e-sup"/></svg></button>
                </div>
                <div class="flex h-7 items-center gap-2 rounded border border-[#dcdedb] bg-[#fdfffc] px-[6px]">
                  <button type="button" aria-label="Lista numerada"><svg class="size-4"><use href="#e-ol"/></svg></button>
                  <button type="button" aria-label="Lista com marcadores"><svg class="size-4"><use href="#e-ul"/></svg></button>
                </div>
                <div class="flex h-7 items-center gap-2 rounded border border-[#dcdedb] bg-[#fdfffc] px-[6px]">
                  <button type="button" aria-label="Diminuir recuo" class="opacity-40"><svg class="size-4"><use href="#e-outdent"/></svg></button>
                  <button type="button" aria-label="Aumentar recuo" class="opacity-40"><svg class="size-4"><use href="#e-indent"/></svg></button>
                  <button type="button" aria-label="Citação"><svg class="size-4"><use href="#e-quote"/></svg></button>
                  <button type="button" aria-label="Criar DIV"><svg class="size-4"><use href="#e-div"/></svg></button>
                </div>
                <div class="flex h-7 items-center gap-2 rounded border border-[#dcdedb] bg-[#fdfffc] px-[6px]">
                  <button type="button" aria-label="Alinhar à esquerda"><svg class="size-4"><use href="#e-al"/></svg></button>
                  <button type="button" aria-label="Centralizar"><svg class="size-4"><use href="#e-ac"/></svg></button>
                  <button type="button" aria-label="Alinhar à direita"><svg class="size-4"><use href="#e-ar"/></svg></button>
                  <button type="button" aria-label="Justificar"><svg class="size-4"><use href="#e-aj"/></svg></button>
                </div>
                <div class="flex h-7 items-center gap-2 rounded border border-[#dcdedb] bg-[#fdfffc] px-[6px]">
                  <button type="button" aria-label="Da esquerda para a direita"><svg class="size-4"><use href="#e-ltr"/></svg></button>
                  <button type="button" aria-label="Da direita para a esquerda"><svg class="size-4"><use href="#e-rtl"/></svg></button>
                </div>
                <div class="flex h-7 items-center rounded border border-[#dcdedb] bg-[#fdfffc] px-[6px]">
                  <button type="button" aria-label="Mostrar blocos"><svg class="size-4"><use href="#e-page"/></svg></button>
                </div>
                <div class="flex h-7 items-center gap-2 rounded border border-[#dcdedb] bg-[#fdfffc] px-[6px]">
                  <button type="button" aria-label="Inserir link"><svg class="size-4"><use href="#e-link"/></svg></button>
                  <button type="button" aria-label="Remover link" class="opacity-40"><svg class="size-4"><use href="#e-unlink"/></svg></button>
                </div>
              </div>
              <div class="flex gap-[6px] fill-[#828582] text-[#828582]">
                <div class="flex h-7 w-[91px] items-center rounded border border-[#dcdedb] bg-[#fdfffc] pr-[6px] pl-[9px]"><select aria-label="Estilo" class="min-w-0 flex-1 appearance-none text-[#4b4f4b]"><option>Estilo</option></select><svg class="pointer-events-none h-[3px] w-[6px] fill-[#333]"><use href="#caret"/></svg></div>
                <div class="flex h-7 w-[91px] items-center rounded border border-[#dcdedb] bg-[#fdfffc] pr-[6px] pl-[9px]"><select aria-label="Formatação" class="min-w-0 flex-1 appearance-none text-[#4b4f4b]"><option>Formata...</option></select><svg class="pointer-events-none h-[3px] w-[6px] fill-[#333]"><use href="#caret"/></svg></div>
                <div class="flex h-7 w-[91px] items-center rounded border border-[#dcdedb] bg-[#fdfffc] pr-[6px] pl-[9px]"><select aria-label="Fonte" class="min-w-0 flex-1 appearance-none text-[#4b4f4b]"><option>Fonte</option></select><svg class="pointer-events-none h-[3px] w-[6px] fill-[#333]"><use href="#caret"/></svg></div>
                <div class="flex h-7 w-[61px] items-center rounded border border-[#dcdedb] bg-[#fdfffc] pr-[6px] pl-[9px]"><select aria-label="Tamanho" class="min-w-0 flex-1 appearance-none text-[#4b4f4b]"><option>Ta...</option></select><svg class="pointer-events-none h-[3px] w-[6px] fill-[#333]"><use href="#caret"/></svg></div>
                <div class="flex h-7 items-center gap-2 rounded border border-[#dcdedb] bg-[#fdfffc] px-[6px]">
                  <button type="button" aria-label="Idioma"><svg class="size-4"><use href="#e-flag"/></svg></button>
                  <button type="button" aria-label="IFrame"><svg class="size-4"><use href="#e-globe"/></svg></button>
                </div>
                <div class="flex h-7 items-center gap-2 rounded border border-[#dcdedb] bg-[#fdfffc] px-[6px]">
                  <button type="button" class="flex items-center gap-px" aria-label="Cor do texto"><svg class="size-4"><use href="#e-color"/></svg><svg class="h-[3px] w-[6px] fill-[#333]"><use href="#caret"/></svg></button>
                  <button type="button" class="flex items-center gap-px" aria-label="Cor do fundo"><svg class="size-4"><use href="#e-bgcolor"/></svg><svg class="h-[3px] w-[6px] fill-[#333]"><use href="#caret"/></svg></button>
                </div>
              </div>
            </div>
            <div id="descricao" role="textbox" aria-multiline="true" aria-label="Descrição" class="mr-[3px] ml-1 h-[201px] rounded-sm border-x border-b border-[#d5d7d4] bg-[#fdfffc] px-5 pt-5 text-[13px] text-[#3f4540]"><span class="border-r border-black">Este é o primeiro Grupo de Questões. Normalmente a descrição comenta sobre o tipo de questões que estão contidas neste grupo.</span></div>
            <div class="mr-[3px] ml-1 flex h-[21px] items-center justify-between bg-linear-to-b from-[#fafcf9] to-[#ebedea] pl-[3px] text-[11px] font-bold text-[#626562]">body<svg class="mt-2.5 size-[6px] fill-[#858885]" viewBox="0 0 6 6"><path d="M6 0v6H0z"/></svg></div>

            <!-- Callout over the toolbar -->
            <div class="pointer-events-none absolute -top-[6px] -left-[9px] h-20 w-[1290px] border-5 border-[#ff0000]"></div>
            <svg class="pointer-events-none absolute top-[76px] left-[819px] h-[76px] w-[80px]" viewBox="0 0 80 76"><path d="M1 1 31 10 11 30z" fill="#f00"/><path d="m17 15 58 57" stroke="#f00" stroke-width="5"/></svg>
            <p class="pointer-events-none absolute top-[134px] left-[904px] text-[35px] leading-[35px] font-bold whitespace-nowrap text-[#ff0000]">Ferramentas para formatação<br>de edição do texto.</p>
          </div>

          <label for="random" class="mt-4 mb-[6px] block font-bold text-[#454b50]">Grupo de randomização:</label>
          <input id="random" type="text" class="block h-[34px] w-full rounded border border-[#cfd1ce] px-3 shadow-[inset_0_1px_1px_#0001]">

          <label for="formula" class="mt-4 mb-[6px] block font-bold text-[#454b50]">Fórmula de relevância:</label>
          <textarea id="formula" rows="1" class="block h-[34px] w-full resize-y rounded border border-[#cfd1ce] px-3 py-1.5 shadow-[inset_0_1px_1px_#0001]"></textarea>
        </main>
      </form>
    </div>
  </div>

  <!-- Page scrollbar -->
  <div class="flex w-[19px] shrink-0 flex-col items-center border-r-2 border-black bg-[#f0f2ef]" aria-hidden="true">
    <svg class="my-[7px] h-1 w-2 shrink-0 rotate-180 fill-[#9a9c9a]"><use href="#caret"/></svg>
    <div class="h-[81%] w-[13px] bg-[#c1c3c0]"></div>
    <svg class="mt-auto mb-[7px] h-1 w-2 shrink-0 fill-[#505250]"><use href="#caret"/></svg>
  </div>
</div>
</body>
</html>
